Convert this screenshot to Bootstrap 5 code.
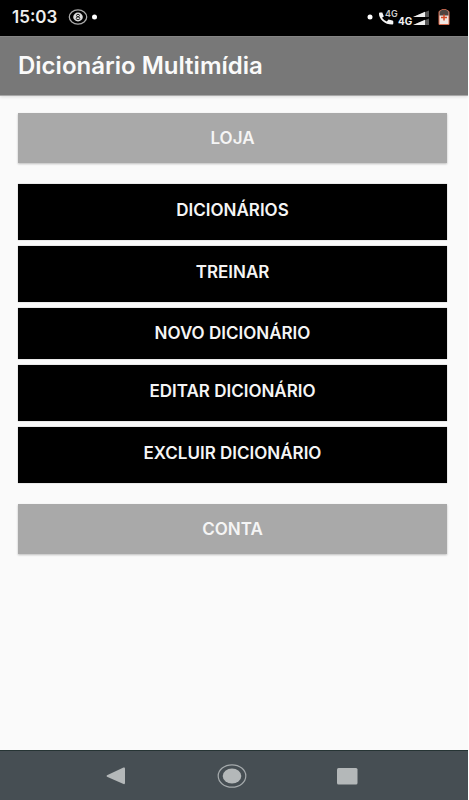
<!DOCTYPE html>
<html lang="pt-BR">
<head>
<meta charset="utf-8">
<meta name="viewport" content="width=device-width, initial-scale=1">
<title>Dicionário Multimídia</title>
<link href="https://cdn.jsdelivr.net/npm/bootstrap@5.3.0/dist/css/bootstrap.min.css" rel="stylesheet">
<style>
body { background: #fafafa; font-family: Inter, Roboto, sans-serif; border-right: 1px solid #fff; }
.status-strip { background: #000; height: 36px; padding: 0 17px 2px 12px; }
.status-time { font-size: 17px; line-height: 20px; font-weight: 600; color: #eee; }
.app-bar { background: #787878; height: 60px; padding: 0 18px; border-top: 1px solid #858585; border-bottom: 1px solid #a8a8a8; box-shadow: 0 1px 3px rgba(0,0,0,.12); }
.app-title { font-size: 24px; line-height: 28px; font-weight: 600; color: #fafafa; }
.menu-area { padding: 17px 21px 24px 18px; }
.menu-group { gap: 6px; margin: 21px 0; }
.menu-btn { --bs-btn-color: #f5f5f5; --bs-btn-bg: #000; --bs-btn-hover-color: #fff; --bs-btn-hover-bg: #222; --bs-btn-active-color: #fff; --bs-btn-active-bg: #333;
  --bs-btn-border-radius: 0; --bs-btn-border-width: 0; --bs-btn-font-size: 17px; --bs-btn-line-height: 20px; --bs-btn-font-weight: 600;
  padding: 16px 12px 20px; box-shadow: 0 0 1px rgba(0,0,0,.4); }
.menu-btn-short { padding: 15px 12px 16px; }
.menu-btn-gray { --bs-btn-bg: #a9a9a9; --bs-btn-hover-bg: #999; --bs-btn-active-bg: #8c8c8c; box-shadow: 0 1px 2px rgba(0,0,0,.25); padding: 15px 12px; }
.nav-strip { background: #464e53; height: 50px; padding-right: 4px; border-top: 1px solid #263434; }
.nav-key { --bs-btn-padding-x: 0; --bs-btn-padding-y: 0; --bs-btn-border-width: 0; line-height: 1; }
</style>
<script src="https://cdn.jsdelivr.net/npm/bootstrap@5.3.0/dist/js/bootstrap.bundle.min.js" defer></script>
</head>
<body class="d-flex flex-column min-vh-100">
<div class="status-strip d-flex align-items-center justify-content-between">
  <div class="d-flex align-items-center">
    <span class="status-time">15:03</span>
    <svg class="ms-2" width="34" height="20" viewBox="0 0 34 20" aria-hidden="true">
      <ellipse cx="13" cy="10" rx="8.7" ry="7.2" fill="none" stroke="#aaa" stroke-width="1.3"/>
      <ellipse cx="13" cy="10" rx="4.8" ry="4.4" fill="#ddd"/>
      <ellipse cx="13" cy="8.5" rx="1.5" ry="1.2" fill="none" stroke="#222"/>
      <ellipse cx="13" cy="11.3" rx="1.8" ry="1.4" fill="none" stroke="#222"/>
      <circle cx="29.500" cy="10" r="2.500" fill="#fff"/>
    </svg>
  </div>
  <svg width="86" height="24" viewBox="0 0 86 24" aria-hidden="true" font-family="Inter, sans-serif">
    <circle cx="5" cy="12" r="2.500" fill="#fff"/>
    <path d="M14 8.500q0-1 1-1h2.300l1.500 4-1.800 1.200q1.800 2.600 4.800 3.700l1.700-1.800 4 1q.8.300.8 1v1.900q0 1-1 1-6 0-9.700-3.500T14 8.500Z" fill="#f4f4f4"/>
    <text x="20" y="12" font-size="9" font-weight="600" fill="#ccc">4G</text>
    <text x="33" y="20" font-size="10" font-weight="700" fill="#f0f0f0">4G</text>
    <path d="M48 12 64 5.500V12Z M48 20 64 13.500V20Z" fill="#555"/>
    <path d="M48 12 60 6.700V12Z M48 20 60 14.700V20Z" fill="#eee"/>
    <path d="M74 6.500q3-1.500 3-2h4q0 .5 3 2v13H74Z" fill="#f0e6e2" stroke="#d8694b"/>
    <path d="M74.500 6.700 77 4.800h4l2.500 1.900v3.800h-9Z" fill="#4f4441"/>
    <path d="M79 9.500v6M76 12.500h6" stroke="#d64a28" stroke-width="1.500"/>
  </svg>
</div>
<header class="app-bar d-flex align-items-center">
  <h1 class="app-title mb-0">Dicionário Multimídia</h1>
</header>
<main class="menu-area flex-grow-1">
  <button type="button" class="btn menu-btn menu-btn-gray d-block w-100">LOJA</button>
  <div class="menu-group d-flex flex-column">
    <button type="button" class="btn menu-btn">DICIONÁRIOS</button>
    <button type="button" class="btn menu-btn">TREINAR</button>
    <button type="button" class="btn menu-btn menu-btn-short">NOVO DICIONÁRIO</button>
    <button type="button" class="btn menu-btn">EDITAR DICIONÁRIO</button>
    <button type="button" class="btn menu-btn">EXCLUIR DICIONÁRIO</button>
  </div>
  <button type="button" class="btn menu-btn menu-btn-gray d-block w-100">CONTA</button>
</main>
<nav class="nav-strip d-flex align-items-center justify-content-center" aria-label="Sistema">
  <div class="row g-0 w-75 text-center">
    <div class="col"><button type="button" class="btn nav-key" aria-label="Voltar"><svg width="30" height="26" viewBox="0 0 30 26"><path d="M6 12.200 22.500 4.500q1.500-.5 1.500 1V20q0 1.500-1.500 1L6 13.800q-1-.8 0-1.600Z" fill="#b4b8b9"/></svg></button></div>
    <div class="col"><button type="button" class="btn nav-key" aria-label="Início"><svg width="30" height="26" viewBox="0 0 30 26"><ellipse cx="15" cy="13" rx="13.800" ry="11.200" fill="none" stroke="#a5aaac" stroke-width="1.200"/><ellipse cx="15" cy="13" rx="9.300" ry="7.500" fill="#b4b8b9"/></svg></button></div>
    <div class="col"><button type="button" class="btn nav-key" aria-label="Recentes"><svg width="30" height="26" viewBox="0 0 30 26"><rect x="4" y="5" width="20.500" height="16.500" rx="1.500" fill="#b4b8b9"/></svg></button></div>
  </div>
</nav>
</body>
</html>
